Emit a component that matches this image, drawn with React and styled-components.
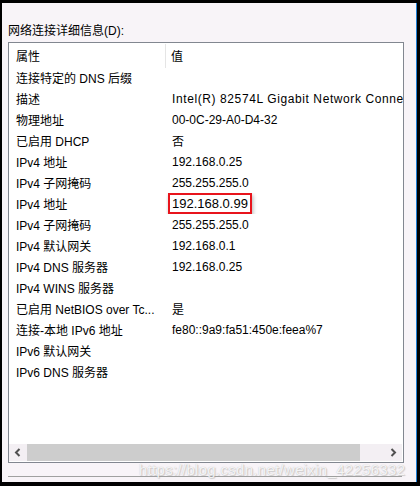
import React from "react";
import styled, { createGlobalStyle } from "styled-components";

const Global = createGlobalStyle`
  html, body { margin: 0; padding: 0; background: #000; }
  body { width: 420px; height: 486px; overflow: hidden; }
  * { box-sizing: border-box; }
`;

const FONT = `"Liberation Sans", "Noto Sans CJK SC", sans-serif`;

const Window = styled.div`
  position: relative;
  margin: 3px 3px 4px 2px;
  width: 415px;
  height: 479px;
  background: #f8f4f8;
  border-right: 1px solid #1e7fd6;
  display: flex;
  flex-direction: column;
  font-family: ${FONT};
  font-size: 12px;
  color: #000;
`;

const Label = styled.div`
  margin: 20px 0 0 6px;
  height: 16px;
  line-height: 16px;
  white-space: nowrap;
`;

const ListBox = styled.div`
  margin: 3px 0 0 6px;
  width: 396px;
  height: 421px;
  border: 1px solid #828790;
  background: #fff;
  display: flex;
  flex-direction: column;
  overflow: hidden;
`;

const Grid = styled.div`
  display: grid;
  grid-template-columns: 157px 1fr;
  height: ${(p) => p.$h}px;
  align-items: center;
  white-space: nowrap;
`;

const Cell = styled.div`
  padding-left: ${(p) => (p.$value ? 6 : 7)}px;
  overflow: hidden;
  height: 100%;
  display: flex;
  align-items: center;
  letter-spacing: ${(p) => (p.$wide ? "0.6px" : "normal")};
`;

const HeadCell = styled(Cell)`
  border-right: ${(p) => (p.$value ? "none" : "1px solid #e5e5e5")};
  margin: ${(p) => (p.$value ? 0 : "1px 0 0")};
  padding-left: ${(p) => (p.$value ? 5 : 7)}px;
`;

const Rows = styled.div`
  flex: 1;
`;

const Marked = styled.span`
  display: inline-flex;
  align-items: center;
  margin-left: -4px;
  height: 21px;
  padding: 0 2px 0 2px;
  border: 2px solid #e8141c;
  box-shadow: 1px 2px 4px rgba(0, 0, 0, 0.3);
  font-size: 13px;
`;

const ScrollBar = styled.div`
  height: 17px;
  margin: 0 1px 1px 0;
  background: #f3eff3;
  display: flex;
  align-items: stretch;
`;

const Arrow = styled.div`
  width: 17px;
  display: flex;
  align-items: center;
  justify-content: center;
`;

const Thumb = styled.div`
  width: 333px;
  margin-left: 1px;
  background: #cdcdcd;
`;

const Track = styled.div`
  flex: 1;
`;

const Divider = styled.div`
  margin: 13px 0 0 6px;
  width: 394px;
  height: 1px;
  background: #a0a0a0;
`;

const Watermark = styled.div`
  position: absolute;
  left: 137px;
  top: 458px;
  font-family: "Liberation Sans", Arial, sans-serif;
  font-size: 15px;
  letter-spacing: 0.3px;
  color: rgba(255, 255, 255, 0.85);
  text-shadow: 0 0 1px rgba(140, 140, 140, 0.55), 1px 1px 1px rgba(160, 160, 160, 0.45);
  white-space: nowrap;
  pointer-events: none;
`;

const Chevron = ({ dir }) => (
  <svg width="7" height="9" viewBox="0 0 7 9">
    <path
      d={dir === "left" ? "M5.5 1 L2 4.5 L5.5 8" : "M1.5 1 L5 4.5 L1.5 8"}
      fill="none"
      stroke="#505050"
      strokeWidth="2"
    />
  </svg>
);

const rows = [
  ["连接特定的 DNS 后缀", ""],
  ["描述", "Intel(R) 82574L Gigabit Network Connection", false, true],
  ["物理地址", "00-0C-29-A0-D4-32"],
  ["已启用 DHCP", "否"],
  ["IPv4 地址", "192.168.0.25"],
  ["IPv4 子网掩码", "255.255.255.0"],
  ["IPv4 地址", "192.168.0.99", true],
  ["IPv4 子网掩码", "255.255.255.0"],
  ["IPv4 默认网关", "192.168.0.1"],
  ["IPv4 DNS 服务器", "192.168.0.25"],
  ["IPv4 WINS 服务器", ""],
  ["已启用 NetBIOS over Tc...", "是"],
  ["连接-本地 IPv6 地址", "fe80::9a9:fa51:450e:feea%7"],
  ["IPv6 默认网关", ""],
  ["IPv6 DNS 服务器", ""],
];

export default function App() {
  return (
    <>
      <Global />
      <Window>
        <Label>网络连接详细信息(D):</Label>
        <ListBox>
          <Grid $h={24}>
            <HeadCell>属性</HeadCell>
            <HeadCell $value>值</HeadCell>
          </Grid>
          <Rows>
            {rows.map(([k, v, mark, wide], i) => (
              <Grid $h={21} key={i}>
                <Cell>{k}</Cell>
                <Cell $value $wide={wide}>
                  {mark ? <Marked>{v}</Marked> : v}
                </Cell>
              </Grid>
            ))}
          </Rows>
          <ScrollBar>
            <Arrow>
              <Chevron dir="left" />
            </Arrow>
            <Thumb />
            <Track />
            <Arrow>
              <Chevron dir="right" />
            </Arrow>
          </ScrollBar>
        </ListBox>
        <Divider />
        <Watermark>https://blog.csdn.net/weixin_42256332</Watermark>
      </Window>
    </>
  );
}
